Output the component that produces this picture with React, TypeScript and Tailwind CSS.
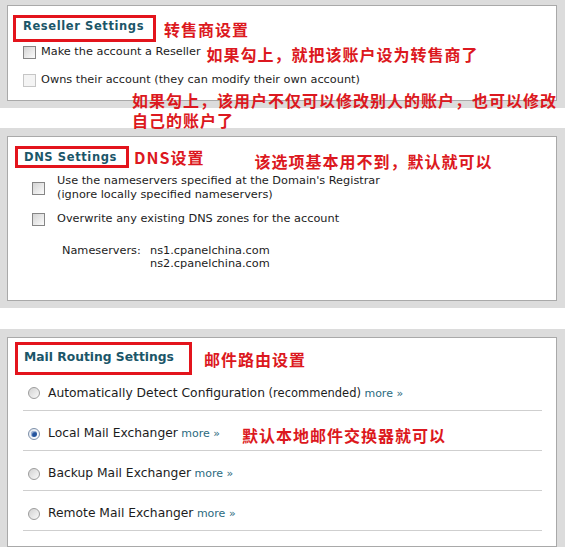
import clsx from "clsx";

const ANNO =
  "font-['Noto_Sans_CJK_SC',sans-serif] font-bold text-[16px] tracking-[1px] leading-none text-[#dc1820] whitespace-nowrap";
const HEAD = "font-bold text-[#1b5669] whitespace-nowrap";

function Checkbox({ faded }: { faded?: boolean }) {
  return (
    <span
      className={clsx(
        "block w-[13px] h-[13px] shrink-0 border",
        faded
          ? "border-[#c6c6c6] bg-[#f4f4f4]"
          : "border-[#868686] bg-linear-to-br from-[#d4d4d4] to-[#fbfbfb]"
      )}
    />
  );
}

function Radio({ checked }: { checked?: boolean }) {
  return (
    <span
      className={clsx(
        "flex w-[12px] h-[12px] shrink-0 items-center justify-center rounded-full border",
        checked
          ? "border-[#7d8fa8] bg-linear-to-br from-[#dfe6ef] to-[#ffffff]"
          : "border-[#9c9c9c] bg-linear-to-br from-[#d2d2d2] to-[#fafafa]"
      )}
    >
      {checked && <span className="block w-[6px] h-[6px] rounded-full bg-[#24549e] shadow-[inset_1px_1px_1px_rgba(255,255,255,0.6)]" />}
    </span>
  );
}

function More() {
  return <span className="text-[11px] text-[#2c6a80]"> more »</span>;
}

const ROUTES = [
  { label: "Automatically Detect Configuration", extra: "(recommended)" },
  { label: "Local Mail Exchanger", checked: true, note: "默认本地邮件交换器就可以" },
  { label: "Backup Mail Exchanger" },
  { label: "Remote Mail Exchanger" },
];

export default function App() {
  return (
    <div className="relative w-[565px] h-[547px] overflow-hidden bg-white font-['DejaVu_Sans',Verdana,sans-serif] text-[#1c1c1c]">
      {/* Reseller */}
      <div className="h-[108px] bg-[#dcdcdc] pt-[5px] pl-[7px]">
        <div className="w-[550px] h-[96px] bg-white border border-[#a9a9a9]">
          <div className="ml-[5px] mt-[9px] flex items-center">
            <div className="w-[143px] h-[27px] border-[3px] border-[#e3141c] pl-[7px]">
              <h2 className={clsx(HEAD, "text-[11.5px] leading-[16px] tracking-[0.6px]")}>Reseller Settings</h2>
            </div>
            <span className={clsx(ANNO, "ml-[8px]")}>转售商设置</span>
          </div>
          <div className="ml-[15px] mt-[4px] h-[13px] flex items-center">
            <Checkbox />
            <span className="ml-[5px] text-[11.3px] whitespace-nowrap">Make the account a Reseller</span>
            <span className={clsx(ANNO, "ml-[6px] mt-[2px]")}>如果勾上，就把该账户设为转售商了</span>
          </div>
          <div className="ml-[15px] mt-[15px] h-[13px] flex items-center">
            <Checkbox faded />
            <span className="ml-[5px] text-[11.3px] whitespace-nowrap">
              Owns their account (they can modify their own account)
            </span>
          </div>
        </div>
      </div>

      {/* note running over the panel edge */}
      <div className={clsx(ANNO, "absolute left-[132px] top-[92px] flex flex-col gap-[4px]")}>
        <span>如果勾上，该用户不仅可以修改别人的账户，也可以修改</span>
        <span>自己的账户了</span>
      </div>

      {/* DNS */}
      <div className="mt-[20px] h-[180px] bg-[#dcdcdc] pt-[8px] pl-[7px]">
        <div className="w-[550px] h-[165px] bg-white border border-[#a9a9a9]">
          <div className="ml-[7px] mt-[8px] flex items-center">
            <div className="w-[114px] h-[22px] border-[3px] border-[#e3141c] pl-[6px]">
              <h2 className={clsx(HEAD, "text-[11.5px] leading-[16px] tracking-[0.6px]")}>DNS Settings</h2>
            </div>
            <span className={clsx(ANNO, "ml-[5px] tracking-[0px]")}>DNS设置</span>
            <span className={clsx(ANNO, "ml-[50px] mt-[8px]")}>该选项基本用不到，默认就可以</span>
          </div>
          <div className="ml-[24px] mt-[5px] flex items-center">
            <Checkbox />
            <span className="ml-[12px] text-[11.3px] leading-[14px] whitespace-nowrap">
              Use the nameservers specified at the Domain's Registrar
              <br />
              (ignore locally specified nameservers)
            </span>
          </div>
          <div className="ml-[24px] mt-[10px] flex items-center">
            <Checkbox />
            <span className="ml-[12px] text-[11.3px] leading-[14px] whitespace-nowrap">
              Overwrite any existing DNS zones for the account
            </span>
          </div>
          <div className="ml-[54px] mt-[18px] grid grid-cols-[88px_auto] text-[11.3px] leading-[13px]">
            <span>Nameservers:</span>
            <span>
              ns1.cpanelchina.com
              <br />
              ns2.cpanelchina.com
            </span>
          </div>
        </div>
      </div>

      {/* Mail routing */}
      <div className="mt-[21px] h-[218px] bg-[#dcdcdc] pt-[8px] pl-[7px]">
        <div className="w-[550px] h-[210px] bg-white border border-[#a9a9a9]">
          <div className="ml-[7px] mt-[4px] flex items-center">
            <div className="w-[177px] h-[33px] border-[3px] border-[#e3141c] pl-[6px] pt-[4px]">
              <h2 className={clsx(HEAD, "text-[12.3px] leading-[16px]")}>Mail Routing Settings</h2>
            </div>
            <span className={clsx(ANNO, "ml-[12px]")}>邮件路由设置</span>
          </div>
          <ul className="ml-[15px] w-[519px]">
            {ROUTES.map((r, i) => (
              <li
                key={r.label}
                className={clsx(
                  "flex items-center border-b border-[#cfcfcf] pl-[5px]",
                  i === 0 ? "h-[36px] pt-[1px]" : "h-[40px] pt-[6px]"
                )}
              >
                <Radio checked={r.checked} />
                <span className="ml-[8px] text-[12.3px] whitespace-nowrap">
                  {r.label}
                  {r.extra && <span className="text-[11.5px]"> {r.extra}</span>}
                  <More />
                </span>
                {r.note && <span className={clsx(ANNO, "ml-[22px] mt-[2px]")}>{r.note}</span>}
              </li>
            ))}
          </ul>
        </div>
      </div>
    </div>
  );
}
